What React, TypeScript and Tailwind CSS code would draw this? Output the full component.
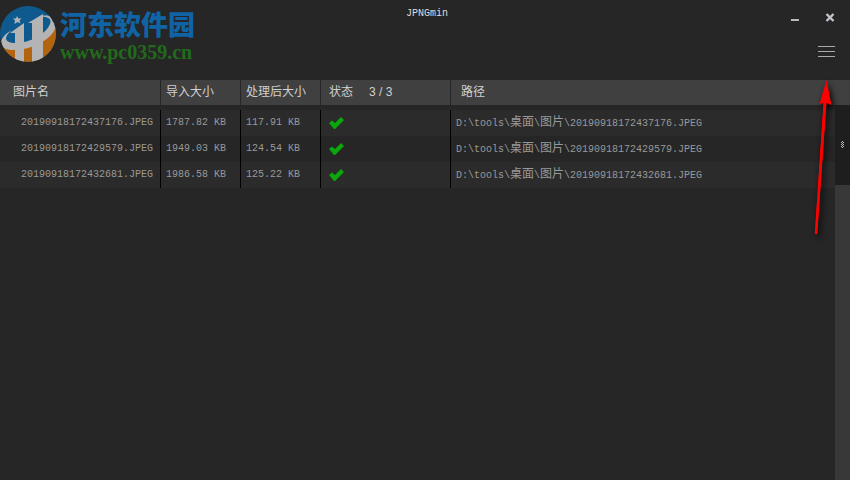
import type React from "react"

const files = [
  { name: "20190918172437176.JPEG", before: "1787.82 KB", after: "117.91 KB" },
  { name: "20190918172429579.JPEG", before: "1949.03 KB", after: "124.54 KB" },
  { name: "20190918172432681.JPEG", before: "1986.58 KB", after: "125.22 KB" },
]

const SiteLogo: React.FC = () => (
  <div className="flex items-start gap-1">
    <svg viewBox="0 0 56 56" className="h-14 w-14 shrink-0" aria-hidden="true">
      <defs>
        <clipPath id="disc">
          <circle cx="28" cy="28" r="28" />
        </clipPath>
      </defs>
      <g clipPath="url(#disc)">
        <rect width="56" height="56" fill="#0e5a8e" />
        <path d="M0 40 C24 46 48 36 56 17 V56 H0Z" fill="#b3640f" />
        <path d="M15 56 V27 H10 L24 17 V56Z M32 56 V17 H28 L43 8 V56Z" fill="#b4b4b4" />
        <path d="M12 24 C-3 32 -3 45 16 44 C36 43 58 30 56 16 C55 9 45 8 38 11 C48 10 52 13 50 18 C46 28 30 37 16 37 C4 37 3 31 12 24Z" fill="#b4b4b4" />
        <path d="M17 10 l1.500 2.500 3 0 -2 2 1 3 -3 -1.500 -3 2 .5 -3.500 -2 -2 3 0Z" fill="#b4b4b4" />
      </g>
    </svg>
    <div className="flex flex-col whitespace-nowrap">
      <span className="font-['Noto_Sans_CJK_SC',sans-serif] text-[27px] leading-9 font-black text-[#1064a5]">河东软件园</span>
      <span className="font-['Liberation_Serif',serif] text-[20px] leading-5 font-bold text-[#226b1c]">www.pc0359.cn</span>
    </div>
  </div>
)

const Check: React.FC = () => (
  <svg viewBox="0 0 16 12" className="block h-3 w-4" role="img" aria-label="完成">
    <path d="M0 6 L3 3.500 L6 6 L12 0 L15 3 L6 12 L5 12Z" fill="#0aa80a" />
  </svg>
)

const App: React.FC = () => {
  return (
    <div className="relative flex min-h-screen flex-col bg-[#262626] font-['Liberation_Mono','Noto_Sans_CJK_SC',monospace] text-[#d0d0d0]">
      <header className="grid h-20 grid-cols-[1fr_auto_1fr] items-start">
        <div className="pt-[6px]">
          <SiteLogo />
        </div>
        <h1 className="pt-1 pl-1 text-[10px] leading-5 text-[#dddddd]">JPNGmin</h1>
        <div className="flex flex-col items-end gap-4 pt-2 pr-[15px]">
          <div className="flex gap-5">
            <button type="button" aria-label="最小化" className="h-4 w-4">
              <svg viewBox="0 0 16 16" className="block h-4 w-4">
                <path d="M4 12H12" stroke="#b8b8c0" strokeWidth="2" />
              </svg>
            </button>
            <button type="button" aria-label="关闭" className="h-4 w-3">
              <svg viewBox="0 0 12 16" className="block h-4 w-3">
                <path d="M3.500 6L10.500 13M10.500 6L3.500 13" stroke="#c4c4cc" strokeWidth="2.400" />
              </svg>
            </button>
          </div>
          <button type="button" aria-label="菜单" className="h-6 w-[17px]">
            <svg viewBox="0 0 17 24" className="block h-6 w-[17px]">
              <path d="M0 6.500H17M0 11.500H17M0 16.500H17" stroke="#aaa" />
            </svg>
          </button>
        </div>
      </header>

      <main className="relative flex-1">
        <table className="w-full table-fixed border-separate border-spacing-0 text-left whitespace-nowrap">
          <colgroup>
            <col className="w-[160px]" />
            <col className="w-[80px]" />
            <col className="w-[80px]" />
            <col className="w-[130px]" />
            <col />
          </colgroup>
          <thead className="bg-[#404040] text-[12px] leading-6">
            <tr className="h-[25px]">
              <th className="p-0 pl-[13px] font-normal">图片名</th>
              <th className="border-l border-[#262626] p-0 pl-[5px] font-normal">导入大小</th>
              <th className="border-l border-[#262626] p-0 pl-[5px] font-normal">处理后大小</th>
              <th className="border-l border-[#262626] p-0 pl-2 font-normal">
                状态<span className="ml-4 font-['Liberation_Sans',sans-serif]">3 / 3</span>
              </th>
              <th className="border-l border-[#262626] p-0 pl-[10px] font-normal">路径</th>
            </tr>
          </thead>
          <tbody className="text-[10px] leading-6 text-[#999]">
            <tr className="h-[5px]" aria-hidden="true" />
            {files.map((file) => (
              <tr key={file.name} className="h-[26px] odd:bg-[#262626] even:bg-[#2b2b2b]">
                <td className="p-0 pl-[21px]">{file.name}</td>
                <td className="border-l border-black p-0 pl-[5px]">{file.before}</td>
                <td className="border-l border-black p-0 pl-[5px]">{file.after}</td>
                <td className="border-l border-black p-0 pl-2">
                  <Check />
                </td>
                <td className="border-l border-black p-0 pl-[5px]">
                  D:\tools\<span className="text-[12px]">桌面</span>\<span className="text-[12px]">图片</span>\{file.name}
                </td>
              </tr>
            ))}
          </tbody>
        </table>

        {/* Scrollbar */}
        <div className="absolute top-[25px] right-0 bottom-0 w-[15px] bg-[#383838]">
          <div className="flex h-20 items-center justify-center bg-[#1e1e1e]">
            <svg viewBox="0 0 5 8" className="h-2 w-[5px]" aria-hidden="true">
              <path d="M2 0h1v1h-1zM1 1h1v1h-1zM3 1h1v1h-1zM2 2h1v1h-1zM1 3h1v1h-1zM3 3h1v1h-1zM2 4h1v1h-1zM1 5h1v1h-1zM3 5h1v1h-1zM2 6h1v1h-1z" fill="#bbb" />
            </svg>
          </div>
        </div>
      </main>

      {/* Pointer to the menu button */}
      <svg viewBox="0 0 34 164" className="pointer-events-none absolute top-[78px] right-1 h-[164px] w-[34px] drop-shadow-[2px_3px_3px_#000000]" aria-hidden="true">
        <path d="M14.500 2 L19.500 27 L14.500 25 L5 156 L3 156 L11.500 25 L7.500 26Z" fill="#ff0000" />
        <path d="M13 24 L4 156" stroke="#ff0000" strokeWidth="2.500" />
      </svg>
    </div>
  )
}

export default App
